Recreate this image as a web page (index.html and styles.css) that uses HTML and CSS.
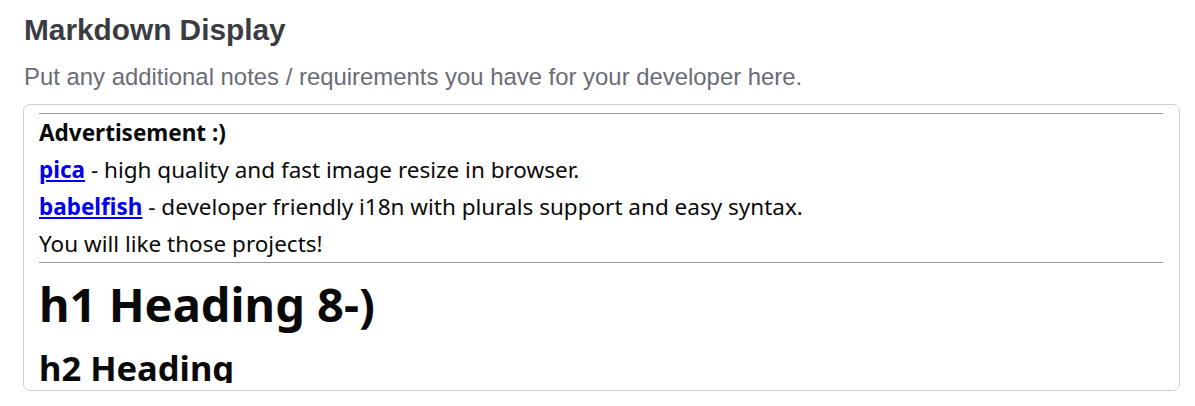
FILE: index.html
```html
<!DOCTYPE html>
<html>
<head>
<meta charset="utf-8">
<link rel="stylesheet" href="styles.css">
</head>
<body>
<div class="page">
  <h2 class="title">Markdown Display</h2>
  <p class="desc">Put any additional notes / requirements you have for your developer here.</p>
  <div class="md">
    <div class="md-inner">
      <hr>
      <p><strong>Advertisement :)</strong></p>
      <p><a href="#"><strong>pica</strong></a> - high quality and fast image resize in browser.</p>
      <p><a href="#"><strong>babelfish</strong></a> - developer friendly i18n with plurals support and easy syntax.</p>
      <p>You will like those projects!</p>
      <hr>
      <h1>h1 Heading 8-)</h1>
      <h2>h2 Heading</h2>
    </div>
  </div>
</div>
</body>
</html>
```

FILE: styles.css
```css
html, body {
  margin: 0;
  padding: 0;
  background: #fff;
}
.page {
  padding: 12px 15px 0 23px;
  font-family: "Liberation Sans", Arial, sans-serif;
}
.title {
  margin: 0 0 0 1px;
  font-size: 29.8px;
  line-height: 36px;
  font-weight: bold;
  color: #3b3b42;
}
.desc {
  margin: 15px 0 13px 1px;
  font-size: 23.9px;
  line-height: 28px;
  color: #6b6c75;
}
.md {
  border: 1px solid #d0d0d4;
  border-radius: 7px;
  padding: 8px 16px 7px 15px;
  font-family: "Noto Sans", "Open Sans", sans-serif;
  font-size: 22.5px;
  color: #0a0a0a;
}
.md-inner {
  height: 270px;
  overflow: hidden;
}
.md hr {
  margin: 0;
  border: 0;
  border-top: 1px solid #999;
  height: 0;
}
.md p {
  margin: 0;
  line-height: 37px;
}
.md a {
  color: #0000ee;
}
.md h1 {
  margin: 11px 0 0;
  font-size: 47px;
  line-height: 60px;
}
.md h2 {
  margin: 12px 0 0;
  font-size: 34.5px;
  line-height: 44px;
}
```
